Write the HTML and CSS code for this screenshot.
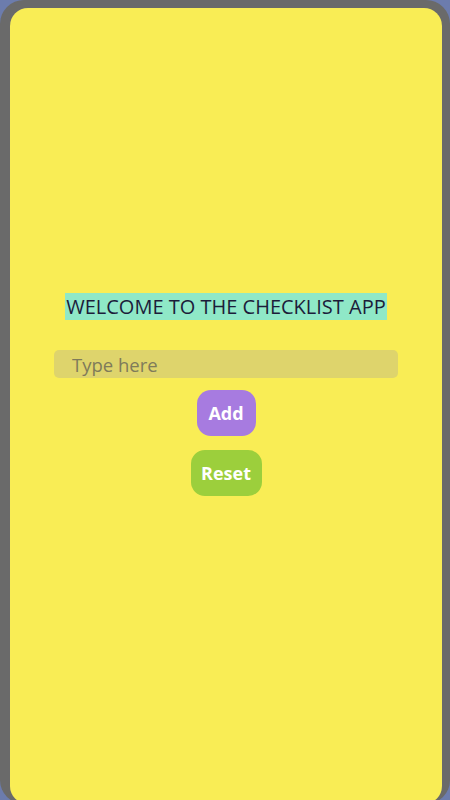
FILE: index.html
```html
<!DOCTYPE html>
<html lang="en">
<head>
    <meta charset="UTF-8">
    <title>Checklist</title>
    <link rel="stylesheet" href="styles.css">
</head>
<body>
<div class="phone">
    <div class="screen">
        <h1 class="title"><span>WELCOME TO THE CHECKLIST APP</span></h1>
        <input class="task-input" type="text" placeholder="Type here">
        <button class="btn btn-add">Add</button>
        <button class="btn btn-reset">Reset</button>
        <ul class="list"></ul>
    </div>
</div>
</body>
</html>
```

FILE: styles.css
```css
@charset "UTF-8";
/* reset */
body,h1,ul,li,p{margin:0;padding:0}
ul{list-style:none}
button,input{outline:none;border:0;font-family:"Open Sans","Noto Sans",sans-serif}
button{cursor:pointer}

body{
    background:#6c7cad;
    font-family:"Open Sans","Noto Sans",sans-serif;
}
.phone{
    width:450px;
    height:804px;
    box-sizing:border-box;
    padding:8px 8px 0 10px;
    background:#6a6a6a;
    border-radius:24px;
    display:flex;
}
.screen{
    flex:1;
    background:#f9ed55;
    border-radius:18px;
    display:flex;
    flex-direction:column;
    align-items:center;
    justify-content:center;
    padding-bottom:22px;
}
.title{
    font-size:20px;
    font-weight:400;
    color:#1c1c3a;
    line-height:26px;
}
.title span{
    background:#8fe8c7;
    padding:0 1px;
}
.task-input{
    width:344px;
    height:28px;
    box-sizing:border-box;
    margin-top:30px;
    padding:0 18px;
    background:#ded46c;
    border-radius:5px;
    font-size:18.5px;
    color:#333;
}
.task-input::placeholder{
    color:#7f7b5a;
}
.btn{
    height:46px;
    padding:0 10px;
    border-radius:14px;
    color:#fff;
    font-size:18px;
    font-weight:700;
    margin-top:12px;
}
.btn-add{
    width:59px;
    background:#a77be0;
}
.btn-reset{
    width:71px;
    background:#9ccf3c;
    margin-top:14px;
}
```
